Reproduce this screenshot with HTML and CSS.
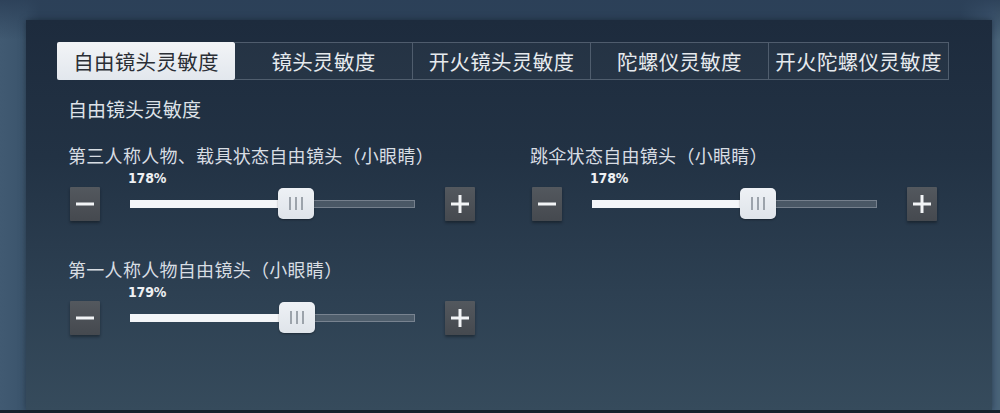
FILE: index.html
```html
<!DOCTYPE html>
<html lang="zh-CN">
<head>
<meta charset="utf-8">
<title>自由镜头灵敏度</title>
<link rel="stylesheet" href="styles.css">
</head>
<body>
<div class="screen">
  <div class="panel">
    <div class="tabs">
      <div class="tab active">自由镜头灵敏度</div>
      <div class="tab">镜头灵敏度</div>
      <div class="tab">开火镜头灵敏度</div>
      <div class="tab">陀螺仪灵敏度</div>
      <div class="tab last">开火陀螺仪灵敏度</div>
    </div>
    <div class="content">
      <div class="section-title">自由镜头灵敏度</div>
      <div class="grid">
        <div class="group">
          <div class="label">第三人称人物、载具状态自由镜头（小眼睛）</div>
          <div class="pct">178%</div>
          <div class="control">
            <button class="btn"><svg width="18" height="18" viewBox="0 0 18 18"><rect x="0" y="7.5" width="18" height="3" fill="#f2f4f6"/></svg></button>
            <div class="track"><div class="fill" style="width:58.4%"></div><div class="knob" style="left:calc(58.4% - 18px)"><span></span><span></span><span></span></div></div>
            <button class="btn"><svg width="18" height="18" viewBox="0 0 18 18"><rect x="0" y="7.5" width="18" height="3" fill="#f2f4f6"/><rect x="7.5" y="0" width="3" height="18" fill="#f2f4f6"/></svg></button>
          </div>
        </div>
        <div class="group">
          <div class="label">跳伞状态自由镜头（小眼睛）</div>
          <div class="pct">178%</div>
          <div class="control">
            <button class="btn"><svg width="18" height="18" viewBox="0 0 18 18"><rect x="0" y="7.5" width="18" height="3" fill="#f2f4f6"/></svg></button>
            <div class="track"><div class="fill" style="width:58.4%"></div><div class="knob" style="left:calc(58.4% - 18px)"><span></span><span></span><span></span></div></div>
            <button class="btn"><svg width="18" height="18" viewBox="0 0 18 18"><rect x="0" y="7.5" width="18" height="3" fill="#f2f4f6"/><rect x="7.5" y="0" width="3" height="18" fill="#f2f4f6"/></svg></button>
          </div>
        </div>
        <div class="group">
          <div class="label">第一人称人物自由镜头（小眼睛）</div>
          <div class="pct">179%</div>
          <div class="control">
            <button class="btn"><svg width="18" height="18" viewBox="0 0 18 18"><rect x="0" y="7.5" width="18" height="3" fill="#f2f4f6"/></svg></button>
            <div class="track"><div class="fill" style="width:58.8%"></div><div class="knob" style="left:calc(58.8% - 18px)"><span></span><span></span><span></span></div></div>
            <button class="btn"><svg width="18" height="18" viewBox="0 0 18 18"><rect x="0" y="7.5" width="18" height="3" fill="#f2f4f6"/><rect x="7.5" y="0" width="3" height="18" fill="#f2f4f6"/></svg></button>
          </div>
        </div>
      </div>
    </div>
  </div>
</div>
</body>
</html>
```

FILE: styles.css
```css
* { box-sizing: border-box; }
html, body { margin: 0; padding: 0; }
body {
  width: 1000px;
  height: 413px;
  overflow: hidden;
  font-family: "Noto Sans CJK SC", "Noto Sans", sans-serif;
  background: linear-gradient(90deg, #415a72 0px, #3b546c 26px, #2c4259 40px, #2c4259 960px, #46607a 992px, #4a6478 1000px);
}
.screen {
  height: 413px;
  padding: 20px 8px 0 26px;
  border-bottom: 3px solid #17222e;
  background: linear-gradient(180deg, rgba(44,64,88,0.9) 0px, rgba(44,64,88,0) 40px);
}
.panel {
  height: 390px;
  padding: 22px 0 0 31px;
  background: linear-gradient(180deg, #1d2b3d 0%, #223244 35%, #2d4052 70%, #364b5c 100%);
  box-shadow: 0 0 6px rgba(15,25,35,0.5);
}
.tabs {
  display: flex;
  height: 38px;
}
.tab {
  width: 178px;
  height: 38px;
  display: flex;
  align-items: center;
  justify-content: center;
  font-size: 20.5px;
  color: #e6eaee;
  background: rgba(255,255,255,0.035);
  border: 1px solid rgba(190,200,215,0.28);
  border-left: none;
  letter-spacing: 0.3px;
}
.tab.last { width: 180px; }
.tab.active {
  background: linear-gradient(180deg, #f2f4f7, #e2e7ed);
  color: #2a2e35;
  border: none;
  border-radius: 2px;
}
.content {
  padding-left: 11px;
}
.section-title {
  margin-top: 19px;
  height: 20px;
  line-height: 20px;
  font-size: 19px;
  color: #dde2e8;
}
.grid {
  margin-top: 26px;
  display: grid;
  grid-template-columns: 407px 407px;
  column-gap: 55px;
  row-gap: 38px;
}
.label {
  height: 20px;
  line-height: 20px;
  font-size: 18px;
  color: #d8dde3;
  white-space: nowrap;
  letter-spacing: 0.3px;
}
.pct {
  margin-top: 6px;
  margin-left: 60px;
  height: 15px;
  line-height: 15px;
  font-family: "DejaVu Sans Condensed", "DejaVu Sans", sans-serif;
  font-stretch: condensed;
  font-weight: bold;
  font-size: 14px;
  color: #eef0f3;
  letter-spacing: -0.2px;
}
.control {
  margin-top: 1px;
  margin-left: 2px;
  display: flex;
  align-items: center;
  gap: 30px;
  height: 34px;
}
.btn {
  width: 30px;
  height: 34px;
  padding: 0;
  border: none;
  border-radius: 1px;
  background: linear-gradient(180deg, #53585e, #45494f);
  box-shadow: 0 2px 3px rgba(10,15,20,0.45);
  display: flex;
  align-items: center;
  justify-content: center;
}
.btn svg { display: block; }
.track {
  position: relative;
  flex: 1;
  height: 8px;
  background: rgba(120,128,138,0.45);
  border: 1px solid rgba(170,178,188,0.45);
}
.fill {
  position: absolute;
  left: -1px;
  top: -1px;
  bottom: -1px;
  background: #f3f5f8;
}
.knob {
  position: absolute;
  top: -13px;
  width: 36px;
  height: 31px;
  border-radius: 5px;
  background: linear-gradient(180deg, #eef1f5, #dfe4ea);
  box-shadow: 0 1px 2px rgba(0,0,0,0.35);
  display: flex;
  align-items: center;
  justify-content: center;
  gap: 4px;
}
.knob span {
  width: 2px;
  height: 13px;
  background: #9ca3ab;
}
```
